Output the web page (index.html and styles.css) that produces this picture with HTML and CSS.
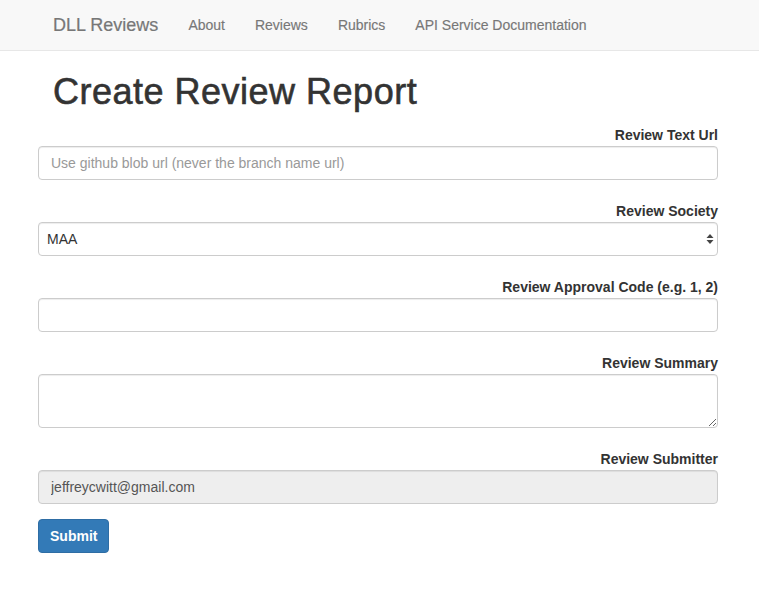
FILE: index.html
```html
<!DOCTYPE html>
<html lang="en">
<head>
<meta charset="utf-8">
<title>Create Review Report</title>
<link rel="stylesheet" href="styles.css">
</head>
<body>
<nav class="navbar">
  <div class="nav-inner">
    <a class="brand" href="#">DLL Reviews</a>
    <a class="nav-link" href="#">About</a>
    <a class="nav-link" href="#">Reviews</a>
    <a class="nav-link" href="#">Rubrics</a>
    <a class="nav-link" href="#">API Service Documentation</a>
  </div>
</nav>
<main class="container">
  <h1 class="title">Create Review Report</h1>
  <form class="form">
    <div class="form-group">
      <label class="label" for="url">Review Text Url</label>
      <input class="control" id="url" type="text" placeholder="Use github blob url (never the branch name url)">
    </div>
    <div class="form-group">
      <label class="label" for="society">Review Society</label>
      <div class="select-wrap">
        <select class="control select" id="society">
          <option>MAA</option>
        </select>
        <svg class="select-arrows" width="8" height="12" viewBox="0 0 8 12"><path d="M4 1 L7.5 5 H0.5 Z M4 11 L7.5 7 H0.5 Z" fill="#444"/></svg>
      </div>
    </div>
    <div class="form-group">
      <label class="label" for="code">Review Approval Code (e.g. 1, 2)</label>
      <input class="control" id="code" type="text">
    </div>
    <div class="form-group">
      <label class="label" for="summary">Review Summary</label>
      <textarea class="control textarea" id="summary"></textarea>
    </div>
    <div class="form-group last">
      <label class="label" for="submitter">Review Submitter</label>
      <input class="control" id="submitter" type="text" value="jeffreycwitt@gmail.com" disabled>
    </div>
    <button class="btn" type="submit">Submit</button>
  </form>
</main>
</body>
</html>
```

FILE: styles.css
```css
* { box-sizing: border-box; }
html, body { margin: 0; padding: 0; }
body {
  font-family: "Liberation Sans", Arial, Helvetica, sans-serif;
  font-size: 14px;
  line-height: 20px;
  color: #333;
  background: #fff;
}
.navbar {
  height: 51px;
  background: #f8f8f8;
  border-bottom: 1px solid #e7e7e7;
}
.nav-inner {
  display: flex;
  align-items: flex-start;
  padding-left: 38px;
}
.brand {
  font-size: 18px;
  line-height: 20px;
  padding: 15px 15px;
  color: #777;
  text-decoration: none;
  height: 50px;
  -webkit-text-stroke: 0.2px #777;
}
.nav-link {
  font-size: 14px;
  line-height: 20px;
  padding: 15px 15px;
  color: #777;
  text-decoration: none;
  -webkit-text-stroke: 0.15px #777;
}
.container {
  width: 680px;
  margin-left: 38px;
}
.title {
  font-size: 36px;
  font-weight: 500;
  line-height: 39.6px;
  letter-spacing: 0.5px;
  -webkit-text-stroke: 0.6px #333;
  margin: 21px 0 13px 15px;
  color: #333;
}
.form-group {
  margin-bottom: 21px;
  display: flex;
  flex-direction: column;
}
.form-group.last { margin-bottom: 15px; }
.label {
  display: block;
  text-align: right;
  font-weight: bold;
  margin-bottom: 1px;
  line-height: 20px;
}
.control {
  display: block;
  width: 100%;
  height: 34px;
  padding: 6px 12px;
  font-family: inherit;
  font-size: 14px;
  line-height: 20px;
  color: #555;
  background: #fff;
  border: 1px solid #ccc;
  border-radius: 4px;
  box-shadow: inset 0 1px 1px rgba(0,0,0,.075);
  margin: 0;
}
.control::placeholder { color: #999; opacity: 1; }
.control:disabled { background: #eee; color: #555; -webkit-text-fill-color: #555; }
.select-wrap { position: relative; }
.select {
  -webkit-appearance: none;
  appearance: none;
  padding-left: 8px;
  color: #333;
}
.select-arrows {
  position: absolute;
  right: 4px;
  top: 11px;
  pointer-events: none;
}
.textarea {
  height: 54px;
  resize: vertical;
}
.btn {
  display: inline-block;
  height: 34px;
  padding: 6px 11px;
  font-family: inherit;
  font-size: 14px;
  font-weight: bold;
  line-height: 20px;
  color: #fff;
  background: #337ab7;
  border: 1px solid #2e6da4;
  border-radius: 4px;
}
```
